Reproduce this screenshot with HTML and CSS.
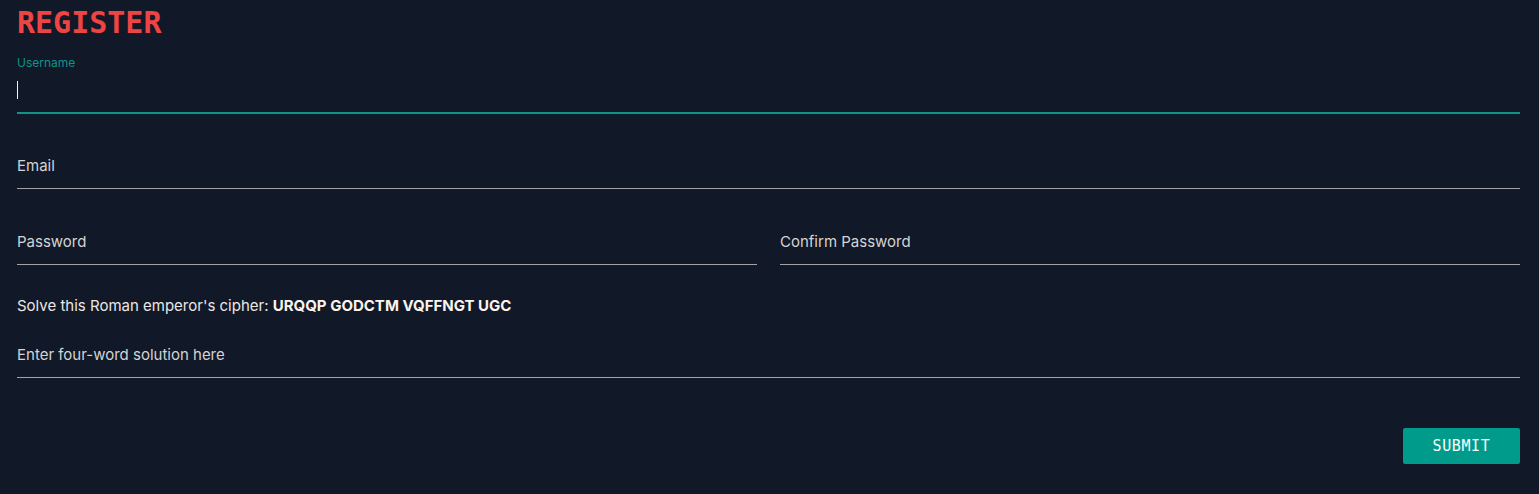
FILE: index.html
```html
<!DOCTYPE html>
<html lang="en">
<head>
<meta charset="utf-8">
<title>Register</title>
<link rel="stylesheet" href="styles.css">
</head>
<body>
<main class="page">
  <h1 class="title">REGISTER</h1>
  <form class="form">
    <div class="field focused">
      <span class="float-label">Username</span>
      <div class="control"><span class="caret"></span></div>
    </div>
    <div class="field">
      <span class="float-label"></span>
      <div class="control"><span class="placeholder">Email</span></div>
    </div>
    <div class="row">
      <div class="field">
        <span class="float-label"></span>
        <div class="control"><span class="placeholder">Password</span></div>
      </div>
      <div class="field">
        <span class="float-label"></span>
        <div class="control"><span class="placeholder">Confirm Password</span></div>
      </div>
    </div>
    <p class="cipher">Solve this Roman emperor's cipher: <strong>URQQP GODCTM VQFFNGT UGC</strong></p>
    <div class="field solution">
      <span class="float-label"></span>
      <div class="control"><span class="placeholder">Enter four-word solution here</span></div>
    </div>
    <div class="actions">
      <button type="button" class="submit">SUBMIT</button>
    </div>
  </form>
</main>
</body>
</html>
```
FILE: styles.css
```css
html, body {
  margin: 0;
  padding: 0;
  background: #111827;
}
body {
  font-family: Inter, "Noto Sans", sans-serif;
  color: #d4d4d4;
}
.page {
  padding: 5px 19px 0 17px;
}
.title {
  margin: 0 0 14px 0;
  font-family: "DejaVu Sans Mono", "Liberation Mono", monospace;
  font-weight: bold;
  font-size: 30px;
  line-height: 36px;
  color: #ef4444;
  letter-spacing: 0;
}
.form {
  display: flex;
  flex-direction: column;
}
.field {
  display: flex;
  flex-direction: column;
  height: 58px;
  box-sizing: border-box;
  border-bottom: 1px solid #a3a3a3;
  margin-bottom: 18px;
}
.field.focused {
  border-bottom-color: #0d9488;
  box-shadow: 0 1px 0 #0d9488;
}
.float-label {
  display: block;
  height: 15px;
  line-height: 16px;
  font-size: 12px;
  color: #0d9488;
}
.control {
  display: flex;
  align-items: center;
  padding-top: 10px;
  height: 20px;
  line-height: 20px;
  font-size: 15px;
}
.caret {
  display: block;
  width: 1px;
  height: 18px;
  margin-top: -1px;
  background: #f5f5f5;
}
.placeholder {
  color: #d4d4d4;
}
.row {
  display: grid;
  grid-template-columns: 1fr 1fr;
  column-gap: 23px;
}
.cipher {
  margin: 13px 0 4px 0;
  font-size: 15px;
  line-height: 20px;
  color: #ebe7e4;
}
.cipher strong {
  font-weight: 700;
  color: #fbf3ec;
}
.solution {
  margin-bottom: 50px;
}
.actions {
  display: flex;
  justify-content: flex-end;
}
.submit {
  width: 117px;
  height: 36px;
  border: none;
  border-radius: 2px;
  background: #009b8b;
  color: #ffffff;
  font-family: "DejaVu Sans Mono", "Liberation Mono", monospace;
  font-size: 15px;
  letter-spacing: 0.6px;
  cursor: pointer;
  padding: 0;
}
```
